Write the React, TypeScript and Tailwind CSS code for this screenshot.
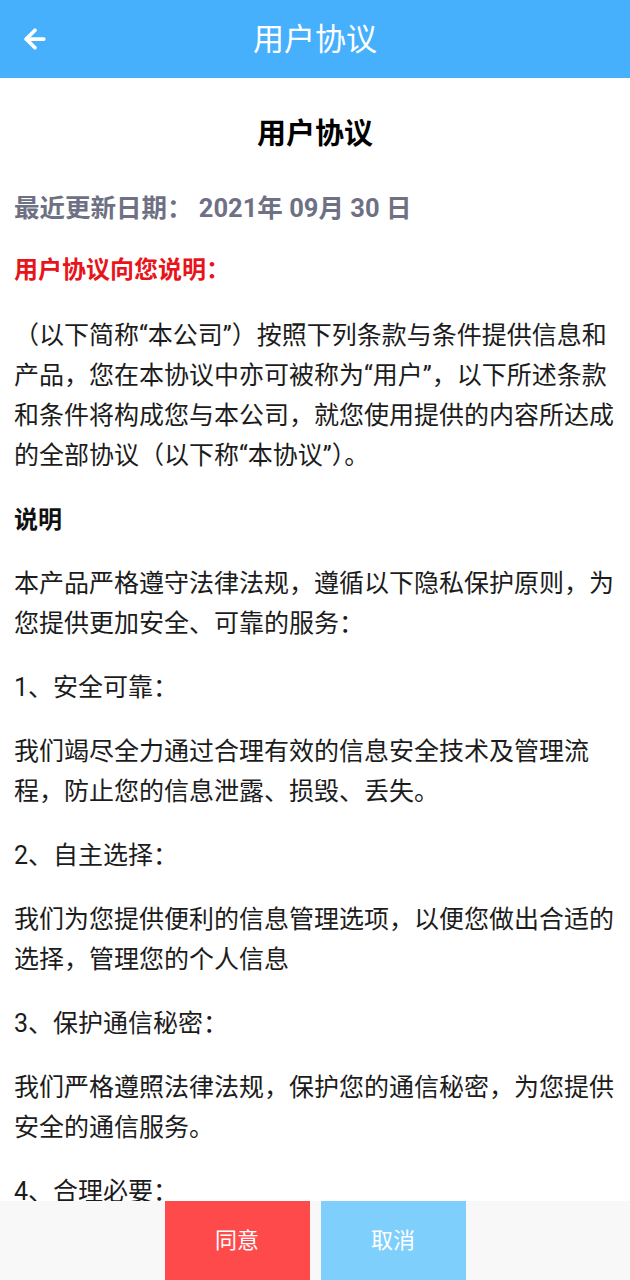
import { ArrowLeft } from "lucide-react";

const font = { fontFamily: 'Roboto, "Noto Sans CJK SC", "Noto Sans", sans-serif' };

type Block = { kind: "heading" | "text"; content: string };

const blocks: Block[] = [
  {
    kind: "text",
    content:
      "（以下简称“本公司”）按照下列条款与条件提供信息和产品，您在本协议中亦可被称为“用户”，以下所述条款和条件将构成您与本公司，就您使用提供的内容所达成的全部协议（以下称“本协议”）。",
  },
  { kind: "heading", content: "说明" },
  { kind: "text", content: "本产品严格遵守法律法规，遵循以下隐私保护原则，为您提供更加安全、可靠的服务：" },
  { kind: "text", content: "1、安全可靠：" },
  { kind: "text", content: "我们竭尽全力通过合理有效的信息安全技术及管理流程，防止您的信息泄露、损毁、丢失。" },
  { kind: "text", content: "2、自主选择：" },
  { kind: "text", content: "我们为您提供便利的信息管理选项，以便您做出合适的选择，管理您的个人信息" },
  { kind: "text", content: "3、保护通信秘密：" },
  { kind: "text", content: "我们严格遵照法律法规，保护您的通信秘密，为您提供安全的通信服务。" },
  { kind: "text", content: "4、合理必要：" },
  { kind: "text", content: "为了向您和其他用户提供更好的服务，我们仅收集必要的信息。" },
];

export default function App() {
  return (
    <div className="flex h-[1280px] w-[630px] flex-col overflow-hidden bg-white" style={font}>
      {/* Top bar */}
      <div className="relative flex h-[78px] shrink-0 items-center justify-center bg-[#47b0fd]">
        <button className="absolute left-[20px] top-[24px] text-white">
          <ArrowLeft className="h-[30px] w-[30px]" strokeWidth={3} />
        </button>
        <h1 className="text-[31px] font-normal leading-none text-white">用户协议</h1>
      </div>

      {/* Content */}
      <div className="flex-1 overflow-hidden px-[14px]">
        <h2 className="mt-[36px] text-center text-[29px] font-bold leading-[40px] text-black">用户协议</h2>
        <p className="mt-[34px] text-[25.5px] font-bold leading-[40px] text-[#6e7084]">最近更新日期： 2021年 09月 30 日</p>
        <p className="mt-[22px] text-[24px] font-bold leading-[40px] text-[#e8141a]">用户协议向您说明：</p>
        <div className="mt-[26px] flex flex-col gap-[24px]">
          {blocks.map((b, i) =>
            b.kind === "heading" ? (
              <p key={i} className="text-[24px] font-bold leading-[40px] text-[#111]">
                {b.content}
              </p>
            ) : (
              <p key={i} className="text-[25px] leading-[40px] text-[#1c1c1c]">
                {b.content}
              </p>
            )
          )}
        </div>
      </div>

      {/* Bottom actions */}
      <div className="flex h-[79px] shrink-0 justify-center gap-[11px] bg-[#f8f8f8]">
        <button className="w-[145px] bg-[#fe4a4a] text-[22px] text-white">同意</button>
        <button className="w-[145px] bg-[#7fcffd] text-[22px] text-white">取消</button>
      </div>
    </div>
  );
}
